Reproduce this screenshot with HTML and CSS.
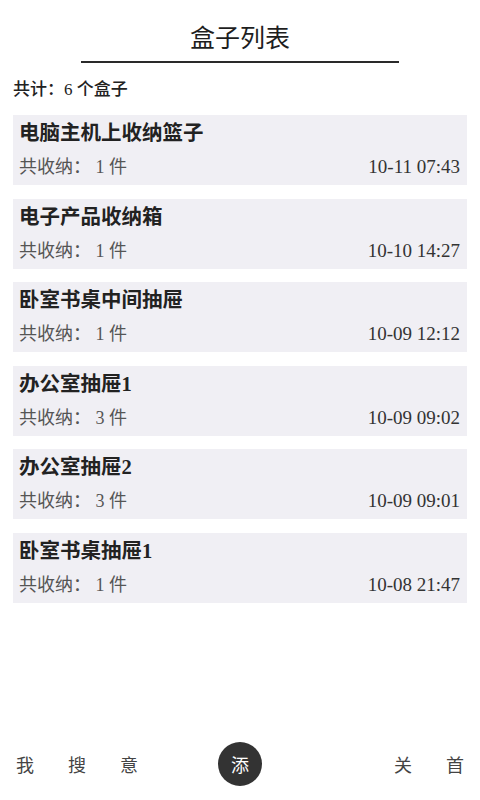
FILE: index.html
```html
<!DOCTYPE html>
<html lang="zh-CN">
<head>
  <meta charset="UTF-8" />
  <meta name="viewport" content="width=device-width, initial-scale=1" />
  <title>盒子列表</title>
  <link rel="stylesheet" href="styles.css">
</head>
<body>
  <header class="header">
    <h1>盒子列表</h1>
    <div class="header-line"></div>
  </header>

  <main class="page">
    <p class="count">共计：6 个盒子</p>

    <ul class="box-list">
      <li class="box">
        <div class="box-name">电脑主机上收纳篮子</div>
        <div class="box-meta">
          <span class="box-items">共收纳： 1 件</span>
          <span class="box-time">10-11 07:43</span>
        </div>
      </li>
      <li class="box">
        <div class="box-name">电子产品收纳箱</div>
        <div class="box-meta">
          <span class="box-items">共收纳： 1 件</span>
          <span class="box-time">10-10 14:27</span>
        </div>
      </li>
      <li class="box">
        <div class="box-name">卧室书桌中间抽屉</div>
        <div class="box-meta">
          <span class="box-items">共收纳： 1 件</span>
          <span class="box-time">10-09 12:12</span>
        </div>
      </li>
      <li class="box">
        <div class="box-name">办公室抽屉1</div>
        <div class="box-meta">
          <span class="box-items">共收纳： 3 件</span>
          <span class="box-time">10-09 09:02</span>
        </div>
      </li>
      <li class="box">
        <div class="box-name">办公室抽屉2</div>
        <div class="box-meta">
          <span class="box-items">共收纳： 3 件</span>
          <span class="box-time">10-09 09:01</span>
        </div>
      </li>
      <li class="box">
        <div class="box-name">卧室书桌抽屉1</div>
        <div class="box-meta">
          <span class="box-items">共收纳： 1 件</span>
          <span class="box-time">10-08 21:47</span>
        </div>
      </li>
    </ul>
  </main>

  <nav class="tabbar">
    <div class="tab-group">
      <span class="tab">我</span>
      <span class="tab">搜</span>
      <span class="tab">意</span>
    </div>
    <button class="add-btn">添</button>
    <div class="tab-group tab-group-right">
      <span class="tab">关</span>
      <span class="tab">首</span>
    </div>
  </nav>
</body>
</html>
```

FILE: styles.css
```css
* {
  margin: 0; padding: 0; box-sizing: border-box;
}
body {
  font-family: "Liberation Serif", "Noto Sans CJK SC", serif;
  background: #fff;
  color: #222;
  min-height: 100vh;
  display: flex;
  flex-direction: column;
}

.header {
  padding-top: 19px;
  text-align: center;
}
.header h1 {
  font-family: "Noto Sans CJK SC", sans-serif;
  font-size: 25px;
  line-height: 34px;
  font-weight: 400;
  color: #1e1e1e;
}
.header-line {
  width: 318px;
  height: 2px;
  margin: 8px auto 0;
  background: #2a2a2a;
}

.page {
  padding: 0 13px;
}

.count {
  margin-top: 16px;
  font-size: 17px;
  line-height: 22px;
  font-weight: 500;
  color: #222;
}

.box-list {
  list-style: none;
  margin-top: 14px;
  display: flex;
  flex-direction: column;
  gap: 13.5px;
}
.box {
  background: #f0eff4;
  height: 70px;
  padding: 4px 7px 4px 6px;
}
.box-name {
  font-size: 20.5px;
  line-height: 28px;
  font-weight: 700;
  color: #222;
}
.box-meta {
  margin-top: 6px;
  display: flex;
  justify-content: space-between;
  align-items: center;
  line-height: 28px;
}
.box-items {
  font-size: 18px;
  color: #555;
}
.box-time {
  font-size: 19px;
  color: #333;
}

.tabbar {
  margin-top: auto;
  padding: 0 16px 14px;
  display: grid;
  grid-template-columns: 1fr auto 1fr;
  align-items: center;
}
.tab-group {
  display: flex;
  gap: 34px;
}
.tab-group-right {
  justify-content: flex-end;
}
.tab {
  font-family: "Noto Sans CJK SC", sans-serif;
  font-size: 18px;
  line-height: 24px;
  color: #444;
}
.add-btn {
  width: 44px;
  height: 44px;
  border-radius: 50%;
  border: none;
  background: #333;
  color: #fff;
  font-family: "Noto Sans CJK SC", sans-serif;
  font-size: 18px;
  line-height: 44px;
}
```
